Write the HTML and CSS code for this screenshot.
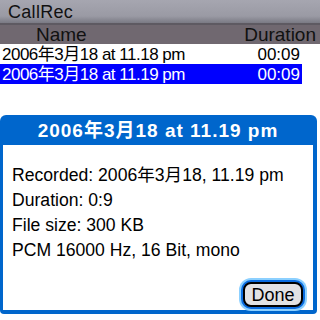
FILE: index.html
```html
<!DOCTYPE html>
<html lang="ja">
<head>
  <meta charset="UTF-8">
  <title>CallRec</title>
  <link rel="stylesheet" href="styles.css">
</head>
<body>
  <div class="screen">
    <div class="titlebar">CallRec</div>

    <div class="list">
      <div class="list-head">
        <span class="col-name">Name</span>
        <span class="col-dur">Duration</span>
      </div>
      <div class="row">
        <span class="name">2006年3月18 at 11.18 pm</span>
        <span class="dur">00:09</span>
      </div>
      <div class="row selected">
        <span class="name">2006年3月18 at 11.19 pm</span>
        <span class="dur">00:09</span>
      </div>
    </div>

    <div class="dialog">
      <div class="dialog-title">2006年3月18 at 11.19 pm</div>
      <div class="dialog-body">
        <p>Recorded: 2006年3月18, 11.19 pm</p>
        <p>Duration: 0:9</p>
        <p>File size: 300 KB</p>
        <p>PCM 16000 Hz, 16 Bit, mono</p>
        <div class="actions">
          <button class="btn">Done</button>
        </div>
      </div>
    </div>
  </div>
</body>
</html>
```

FILE: styles.css
```css
* {
  margin: 0;
  padding: 0;
  box-sizing: border-box;
}

body {
  width: 320px;
  height: 320px;
  overflow: hidden;
  background: #ffffff;
  font-family: "Liberation Sans", "Noto Sans CJK JP", sans-serif;
  color: #000;
}

.screen {
  display: flex;
  flex-direction: column;
  height: 320px;
}

/* Top title bar */
.titlebar {
  height: 25px;
  padding: 2px 0 0 8px;
  font-size: 18px;
  letter-spacing: 0.3px;
  color: #111;
  background: linear-gradient(#a6a6b0, #9a9aa4 70%, #7a7a84);
  border-bottom: 2px solid #5e5a62;
}

/* List */
.list-head {
  display: flex;
  justify-content: space-between;
  height: 19px;
  padding: 0 4px 0 36px;
  font-size: 19px;
  line-height: 20px;
  color: #111;
  background: #706870;
}

.row {
  display: flex;
  justify-content: space-between;
  width: 302px;
  height: 20px;
  padding: 0 2px;
  font-size: 17px;
  line-height: 21px;
}

.row:first-of-type {
  margin-top: 3px;
}

.row .name {
  letter-spacing: -0.5px;
}

.row.selected {
  background: #0000ff;
  color: #fff;
}

/* Detail dialog */
.dialog {
  margin-top: 31px;
  width: 317px;
  height: 199px;
  background: #0066cc;
  border-radius: 6px 6px 4px 4px;
  display: flex;
  flex-direction: column;
  padding: 0 4px 4px 3px;
}

.dialog-title {
  height: 30px;
  text-align: center;
  color: #fff;
  font-weight: bold;
  font-size: 19px;
  letter-spacing: 1px;
  line-height: 31px;
}

.dialog-body {
  flex-grow: 1;
  background: #fff;
  padding: 18px 0 0 9px;
  display: flex;
  flex-direction: column;
}

.dialog-body p {
  font-size: 17.6px;
  line-height: 25px;
}

.actions {
  margin-top: auto;
  display: flex;
  justify-content: flex-end;
  padding: 0 10px 3px 0;
}

.btn {
  width: 60px;
  height: 25px;
  font-family: inherit;
  font-size: 18px;
  line-height: 20px;
  color: #000;
  background: #e2e2e4;
  border: 2px solid #000;
  border-radius: 8px;
  box-shadow: 0 0 0 2px #0a6ce0, 0 0 0 4px #8cd0ff;
}
```
